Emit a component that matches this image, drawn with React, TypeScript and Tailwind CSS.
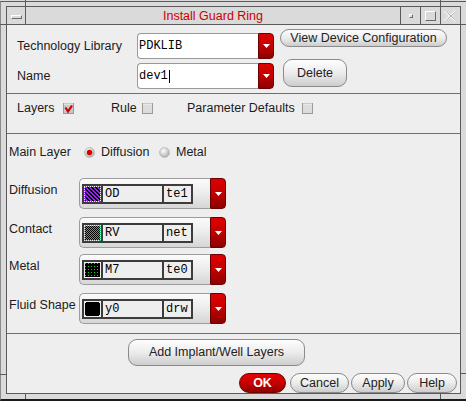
import React from 'react'

type SwatchKind = 'diff' | 'cont' | 'metal' | 'fluid'

function DropButton() {
  return (
    <div className="flex w-[16px] shrink-0 items-center justify-center rounded-r-[4px] border border-[#6a0000] bg-linear-to-b from-[#e00000] via-[#c20000] to-[#8c0000]">
      <svg width="7" height="4" viewBox="0 0 7 4">
        <path d="M0 0H7L3.5 4Z" fill="#fff" />
      </svg>
    </div>
  )
}

function Combo({ value, cursor }: { value: string; cursor?: boolean }) {
  return (
    <div className="flex h-[26px] w-[137px]">
      <div className="flex flex-1 items-center rounded-l-[4px] border border-r-0 border-[#9a9a9a] bg-white pl-[1px] font-['Liberation_Mono',monospace] text-[12px] text-black">
        {value}
        {cursor && <span className="ml-[1px] inline-block h-[13px] w-px bg-black" />}
      </div>
      <DropButton />
    </div>
  )
}

function Swatch({ kind }: { kind: SwatchKind }) {
  return (
    <svg width="17" height="16" viewBox="0 0 17 16" shapeRendering="crispEdges">
      <defs>
        <pattern id="pat-diff" width="4" height="4" patternUnits="userSpaceOnUse">
          <rect width="4" height="4" fill="#000" />
          <rect x="0" y="0" width="2" height="1" fill="#9b1cff" />
          <rect x="1" y="1" width="2" height="1" fill="#9b1cff" />
          <rect x="2" y="2" width="2" height="1" fill="#9b1cff" />
          <rect x="3" y="3" width="1" height="1" fill="#9b1cff" />
          <rect x="0" y="3" width="1" height="1" fill="#9b1cff" />
        </pattern>
        <pattern id="pat-cont" width="2" height="2" patternUnits="userSpaceOnUse">
          <rect width="2" height="2" fill="#000" />
          <rect x="0" y="0" width="1" height="1" fill="#00d070" />
          <rect x="1" y="1" width="1" height="1" fill="#00d070" />
        </pattern>
        <pattern id="pat-metal" width="3" height="3" patternUnits="userSpaceOnUse">
          <rect width="3" height="3" fill="#000" />
          <rect x="1" y="1" width="1" height="1" fill="#00e000" />
        </pattern>
      </defs>
      {kind === 'diff' && (
        <>
          <rect x="1" y="1" width="15" height="14" fill="url(#pat-diff)" />
          <rect x="0.5" y="0.5" width="16" height="15" fill="none" stroke="#9b1cff" strokeDasharray="1 1" />
        </>
      )}
      {kind === 'cont' && (
        <>
          <rect x="1" y="1" width="15" height="14" fill="url(#pat-cont)" />
          <rect x="0.5" y="0.5" width="16" height="15" fill="none" stroke="#00d070" strokeDasharray="1 1" />
        </>
      )}
      {kind === 'metal' && <rect x="1" y="1" width="15" height="14" fill="url(#pat-metal)" />}
      {kind === 'fluid' && (
        <>
          <rect x="1" y="1" width="15" height="14" fill="#000" />
          <rect x="1" y="1" width="1" height="1" fill="#eee" />
          <rect x="15" y="1" width="1" height="1" fill="#eee" />
          <rect x="1" y="14" width="1" height="1" fill="#eee" />
          <rect x="15" y="14" width="1" height="1" fill="#eee" />
        </>
      )}
    </svg>
  )
}

function LayerCombo({ kind, name, purpose }: { kind: SwatchKind; name: string; purpose: string }) {
  return (
    <div className="flex h-[31px] w-[147px]">
      <div className="flex-1 rounded-l-[5px] border border-r-0 border-[#9c9c9c] bg-linear-to-b from-[#fbfbfb] via-[#ececec] to-[#d6d6d6] pl-[2px] pt-[5px]">
        <div className="flex h-[20px] w-[111px] border-2 border-[#3c3c3c] bg-[#eeeeee] font-['Liberation_Mono',monospace] text-[12px] text-black">
          <div className="w-[17px]">
            <Swatch kind={kind} />
          </div>
          <div className="flex w-[61px] items-center border-l-2 border-[#3c3c3c] pl-[2px]">{name}</div>
          <div className="flex flex-1 items-center border-l-2 border-[#3c3c3c] pl-[2px]">{purpose}</div>
        </div>
      </div>
      <DropButton />
    </div>
  )
}

function Btn({ className, children }: { className: string; children: React.ReactNode }) {
  return (
    <div
      className={`flex items-center justify-center border border-[#8a8a8a] bg-linear-to-b from-[#fdfdfd] via-[#ececec] to-[#cdcdcd] text-[#222] ${className}`}
    >
      {children}
    </div>
  )
}

function CheckBox({ checked }: { checked?: boolean }) {
  return (
    <svg width="11" height="11" viewBox="0 0 11 11" className="shrink-0">
      <rect x="0.5" y="0.5" width="10" height="10" fill={checked ? '#c8c8c8' : '#dcdcdc'} stroke="#9a9a9a" />
      <path d="M1 1H10" stroke="#f6f6f6" />
      {checked && <path d="M2.5 4.5L5 8.5L9 2.5" fill="none" stroke="#d00000" strokeWidth="2.2" />}
    </svg>
  )
}

function Radio({ on }: { on?: boolean }) {
  return (
    <svg width="11" height="11" viewBox="0 0 11 11" className="shrink-0">
      <defs>
        <radialGradient id={on ? 'rg-on' : 'rg-off'} cx="0.4" cy="0.35" r="0.7">
          <stop offset="0" stopColor="#ffffff" />
          <stop offset="1" stopColor="#a8a8a8" />
        </radialGradient>
      </defs>
      <circle cx="5.5" cy="5.5" r="5" fill={`url(#${on ? 'rg-on' : 'rg-off'})`} stroke="#b0b0b0" strokeWidth="0.6" />
      {on && <circle cx="5.5" cy="5.5" r="2.7" fill="#d40000" />}
    </svg>
  )
}

export default function App() {
  return (
    <div className="relative h-[401px] w-[466px] bg-[#dadada] pt-[1px] font-['Liberation_Sans',Arial,sans-serif] text-[12.5px] text-[#1c1c1c]">
      <div className="h-[400px] border-t border-b-2 border-l border-t-[#5a5a5a] border-b-[#1a1a1a] border-l-[#8a8a8a] pb-[5px] pl-[5px] pr-[5px] pt-[4px]">
        <div className="flex h-[388px] w-[455px] flex-col border border-[#5a5a5a]">
          {/* title bar */}
          <div className="flex h-[18px] shrink-0 border-b border-[#5a5a5a]">
            <div className="flex w-[19px] items-center justify-center border-r border-[#5a5a5a] pt-[2px]">
              <div className="h-[4px] w-[11px] border-l border-t border-b border-r border-l-white border-t-white border-b-[#6a6a6a] border-r-[#6a6a6a]" />
            </div>
            <div className="flex flex-1 items-center justify-center border-r border-[#5a5a5a] pt-[2px] text-[#cc0000]">
              Install Guard Ring
            </div>
            <div className="flex w-[20px] items-center justify-center border-r border-[#5a5a5a] pt-[1px]">
              <div className="h-[4px] w-[4px] border border-l-white border-t-white border-b-[#6a6a6a] border-r-[#6a6a6a]" />
            </div>
            <div className="flex w-[20px] items-center justify-center border-r border-[#5a5a5a] pt-[1px]">
              <div className="h-[10px] w-[11px] border border-l-white border-t-white border-b-[#6a6a6a] border-r-[#6a6a6a]" />
            </div>
            <div className="flex w-[19px] items-center justify-center pt-[1px]">
              <svg width="13" height="12" viewBox="0 0 13 12">
                <path d="M1 1L12 11M12 1L1 11" stroke="#ffffff" strokeWidth="2.2" />
                <path d="M1.5 1L12.5 11M12.5 1L1.5 11" stroke="#a9a9a9" strokeWidth="1" />
              </svg>
            </div>
          </div>

          {/* content */}
          <div className="flex flex-1 flex-col overflow-hidden bg-[#eeeeee]">
            <div className="mt-[4px] flex items-start">
              <div className="mt-[4px] flex h-[26px] w-[130px] items-center pl-[10px]">Technology Library</div>
              <div className="mt-[4px]">
                <Combo value="PDKLIB" />
              </div>
              <Btn className="ml-[6px] h-[18px] w-[167px] rounded-full">View Device Configuration</Btn>
            </div>
            <div className="flex items-start">
              <div className="mt-[4px] flex h-[26px] w-[130px] items-center pl-[10px]">Name</div>
              <div className="mt-[4px]">
                <Combo value="dev1" cursor />
              </div>
              <Btn className="ml-[9px] h-[28px] w-[64px] rounded-[9px]">Delete</Btn>
            </div>

            <div className="mt-[4px] h-px shrink-0 bg-[#6f6f6f]" />

            <div className="mt-[3px] flex h-[22px] items-center pl-[10px]">
              <div className="w-[46px]">Layers</div>
              <CheckBox checked />
              <div className="ml-[37px] w-[31px]">Rule</div>
              <CheckBox />
              <div className="ml-[34px] w-[115px]">Parameter Defaults</div>
              <CheckBox />
            </div>

            <div className="mt-[14px] h-px shrink-0 bg-[#6f6f6f]" />

            <div className="mt-[8px] flex h-[20px] items-center pl-[2px]">
              <div className="w-[75px]">Main Layer</div>
              <Radio on />
              <div className="ml-[6px] w-[58px]">Diffusion</div>
              <Radio />
              <div className="ml-[6px]">Metal</div>
            </div>

            <div className="mt-[16px] flex items-start">
              <div className="flex h-[24px] w-[72px] items-center pl-[2px]">Diffusion</div>
              <LayerCombo kind="diff" name="OD" purpose="te1" />
            </div>
            <div className="mt-[8px] flex items-start">
              <div className="flex h-[24px] w-[72px] items-center pl-[2px]">Contact</div>
              <LayerCombo kind="cont" name="RV" purpose="net" />
            </div>
            <div className="mt-[6px] flex items-start">
              <div className="flex h-[24px] w-[72px] items-center pl-[2px]">Metal</div>
              <LayerCombo kind="metal" name="M7" purpose="te0" />
            </div>
            <div className="mt-[8px] flex items-start">
              <div className="flex h-[24px] w-[72px] items-center pl-[2px]">Fluid Shape</div>
              <LayerCombo kind="fluid" name="y0" purpose="drw" />
            </div>

            <div className="mt-[9px] h-px shrink-0 bg-[#6f6f6f]" />

            <div className="mt-[5px] flex">
              <Btn className="ml-[121px] h-[27px] w-[177px] rounded-[9px]">Add Implant/Well Layers</Btn>
            </div>

            <div className="mt-[7px] flex shrink-0">
              <div className="ml-[232px] flex h-[20px] w-[47px] items-center justify-center rounded-full border border-[#700000] bg-linear-to-b from-[#e40000] via-[#c80000] to-[#900000] font-bold text-white">
                OK
              </div>
              <Btn className="ml-[4px] h-[20px] w-[59px] rounded-full">Cancel</Btn>
              <Btn className="ml-[2px] h-[20px] w-[54px] rounded-full">Apply</Btn>
              <Btn className="ml-[2px] h-[20px] w-[50px] rounded-full">Help</Btn>
            </div>
          </div>
        </div>
      </div>

      {/* frame corner marks */}
      <div className="absolute left-[25px] top-0 h-[7px] w-px bg-[#5a5a5a]" />
      <div className="absolute left-[440px] top-0 h-[7px] w-px bg-[#5a5a5a]" />
      <div className="absolute left-[25px] top-[394px] h-[5px] w-px bg-[#5a5a5a]" />
      <div className="absolute left-[440px] top-[394px] h-[5px] w-px bg-[#5a5a5a]" />
      <div className="absolute left-0 top-[24px] h-px w-[6px] bg-[#5a5a5a]" />
      <div className="absolute left-0 top-[374px] h-px w-[6px] bg-[#5a5a5a]" />
      <div className="absolute left-[461px] top-[24px] h-px w-[5px] bg-[#5a5a5a]" />
      <div className="absolute left-[461px] top-[373px] h-px w-[5px] bg-[#5a5a5a]" />
    </div>
  )
}
